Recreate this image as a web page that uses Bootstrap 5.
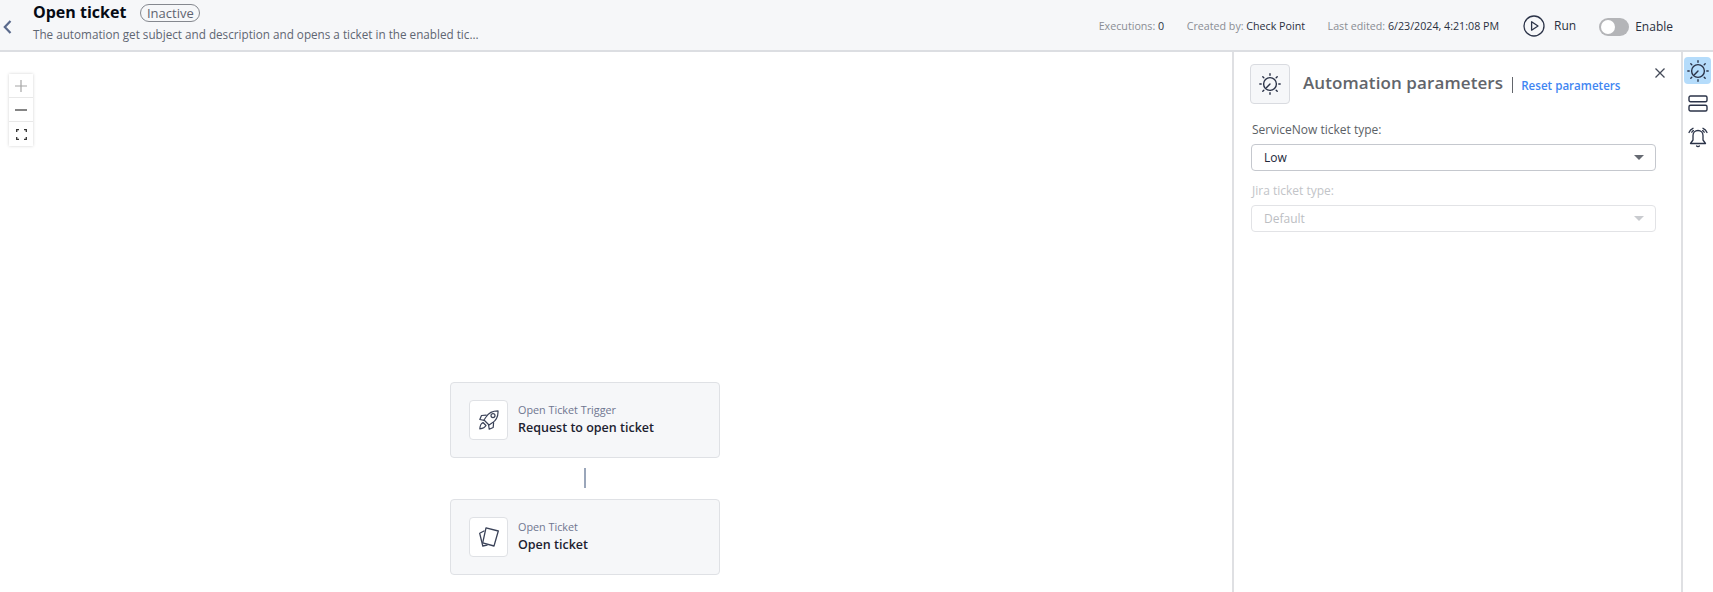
<!DOCTYPE html>
<html lang="en">
<head>
    <meta charset="UTF-8">
    <meta name="viewport" content="width=device-width, initial-scale=1.0">
    <title>Open ticket</title>
    <link href="https://cdn.jsdelivr.net/npm/bootstrap@5.3.3/dist/css/bootstrap.min.css" rel="stylesheet">
    <style>
        html, body { height: 100%; }
        body {
            font-family: "Open Sans", "Liberation Sans", sans-serif;
            font-size: 12px;
            color: #22283a;
            background: #fff;
            overflow: hidden;
        }
        .app-shell { height: 592px; }
        .top-bar {
            height: 52px;
            background: #f6f7f9;
            border-bottom: 2px solid #dcdee2;
        }
        .back-btn { width: 33px; padding-left: 3px; margin-top: 2px; }
        .title-block { padding-top: 1px; }
        .auto-title { font-size: 16px; font-weight: 700; color: #050a14; line-height: 23px; margin: 0; }
        .status-pill {
            font-size: 13px;
            line-height: 16px;
            color: #5f6470;
            border: 1px solid #85888f;
            border-radius: 10px;
            padding: 0 5px;
            margin-left: 14px;
            width: 60px;
            text-align: center;
        }
        .auto-desc { font-size: 11.7px; line-height: 16px; color: #5f6672; margin: 2px 0 0; }
        .meta-row { padding-top: 3px; color: #2a3040; font-size: 10.7px; }
        .meta-row .meta-key { color: #8a8d94; }
        .meta-gap { margin-left: 22.5px; }
        .run-label { font-size: 12px; margin-left: 9px; color: #2a3040; }
        .run-wrap { margin-left: 24px; margin-top: -1px; }
        .toggle-track {
            width: 30px;
            height: 18px;
            border-radius: 9px;
            background: #b4b5b8;
            margin-left: 23px;
            padding: 2px;
        }
        .toggle-knob { width: 14px; height: 14px; border-radius: 50%; background: #fff; display: block; }
        .enable-label { font-size: 12px; margin-left: 6px; margin-right: 40px; color: #2a3040; }
        .work-area { height: 540px; }
        .flow-canvas { flex: 1 1 auto; position: relative; }
        .zoom-tools {
            position: absolute;
            left: 9px;
            top: 22px;
            width: 24px;
            background: #fff;
            box-shadow: 0 0 3px rgba(0, 0, 0, .18);
        }
        .zoom-tools button {
            display: flex;
            align-items: center;
            justify-content: center;
            width: 24px;
            height: 24px;
            padding: 0;
            border: 0;
            background: #fff;
            border-bottom: 1px solid #e8e8e8;
        }
        .zoom-tools button:last-child { border-bottom: 0; }
        .flow-stack { position: absolute; left: 450px; top: 330px; width: 270px; }
        .flow-node {
            height: 76px;
            background: #f6f7f9;
            border: 1px solid #dfe1e5;
            border-radius: 4px;
            padding: 0 18px;
        }
        .node-icon {
            width: 39px;
            height: 40px;
            background: #fff;
            border: 1px solid #dfe1e5;
            border-radius: 4px;
            margin-right: 10px;
        }
        .node-text { margin-top: -1px; }
        .node-kind { font-size: 10.8px; line-height: 15px; color: #6f7690; }
        .node-name { font-size: 12.5px; font-weight: 600; line-height: 18px; color: #1d2230; margin-top: 2px; }
        .flow-link { width: 2px; height: 20px; background: #9aa6ba; margin: 10px auto 11px; }
        .param-panel {
            width: 451px;
            flex: 0 0 451px;
            border-left: 2px solid #dfe0e3;
            border-right: 2px solid #dfe0e3;
            padding: 12px 25px 0 16px;
            position: relative;
        }
        .param-icon {
            width: 40px;
            height: 40px;
            background: #f6f7f9;
            border: 1px solid #d9dbe0;
            border-radius: 4px;
        }
        .param-title { font-size: 17px; font-weight: 600; color: #62656b; margin-left: 13px; letter-spacing: .1px; line-height: 22px; margin-bottom: 2px; }
        .param-sep { width: 1px; height: 16px; background: #62656b; margin: 2px 9px 0; }
        .reset-link { font-size: 11.6px; font-weight: 600; color: #3f86f2; text-decoration: none; margin-top: 3px; margin-left: -1px; }
        .close-btn { position: absolute; right: 16px; top: 16px; border: 0; background: none; padding: 0; line-height: 0; }
        .field-label { display: block; font-size: 12px; line-height: 16px; color: #5b5f66; margin: 0 0 6px 2px; }
        .field-select {
            width: 405px;
            height: 27px;
            margin-left: 1px;
            padding: 0 30px 0 12px;
            font-size: 12px;
            color: #22283a;
            border: 1px solid #c5c8ce;
            border-radius: 4px;
            background-position: right 11px center;
            background-size: 10px 5px;
            background-image: url("data:image/svg+xml,%3Csvg xmlns='http://www.w3.org/2000/svg' viewBox='0 0 10 5'%3E%3Cpath d='M0 0h10L5 5z' fill='%23666a72'/%3E%3C/svg%3E");
        }
        .field-select:disabled {
            background-color: #fff;
            color: #bcbec3;
            border-color: #e2e3e6;
            background-image: url("data:image/svg+xml,%3Csvg xmlns='http://www.w3.org/2000/svg' viewBox='0 0 10 5'%3E%3Cpath d='M0 0h10L5 5z' fill='%23c9cbcf'/%3E%3C/svg%3E");
        }
        .field-off { color: #c2c4c8; }
        .first-field { margin-top: 18px; }
        .next-field { margin-top: 12px; }
        .side-rail { width: 30px; flex: 0 0 30px; padding: 5px 1px 0; }
        .rail-btn {
            width: 27px;
            height: 27px;
            border-radius: 4px;
            border: 0;
            padding: 0;
            background: none;
            display: flex;
            align-items: center;
            justify-content: center;
            margin-bottom: 6px;
        }
        .rail-btn.is-active { background: #b5dcfb; }
    </style>
</head>
<body>
    <svg class="d-none">
        <symbol id="ico-knob" viewBox="0 0 24 24">
            <g fill="none" stroke="#2b3348" stroke-width="1.4" stroke-linecap="round">
                <circle cx="12" cy="12" r="6.4"/>
                <path d="M12 12 8.600 15.600"/>
                <path d="M12 1.800v1.400M12 20.800v1.400M1.800 12h1.400M20.800 12h1.400M4.800 4.800l1 1M18.200 18.200l1 1M19.200 4.800l-1 1M5.800 18.200l-1 1"/>
            </g>
        </symbol>
    </svg>

    <div class="app-shell d-flex flex-column">
        <!-- top bar -->
        <header class="top-bar d-flex align-items-center">
            <a class="back-btn d-block" href="#">
                <svg width="9" height="14" viewBox="0 0 9 14"><path d="M7.500 1 1.800 7l5.700 6" fill="none" stroke="#5a6a8c" stroke-width="2.200"/></svg>
            </a>
            <div class="title-block flex-grow-1 align-self-start">
                <div class="d-flex align-items-center">
                    <h1 class="auto-title">Open ticket</h1>
                    <span class="status-pill">Inactive</span>
                </div>
                <p class="auto-desc">The automation get subject and description and opens a ticket in the enabled tic...</p>
            </div>
            <div class="meta-row d-flex align-items-center">
                <span><span class="meta-key">Executions:</span> 0</span>
                <span class="meta-gap"><span class="meta-key">Created by:</span> Check Point</span>
                <span class="meta-gap"><span class="meta-key">Last edited:</span> 6/23/2024, 4:21:08 PM</span>
                <span class="run-wrap d-flex align-items-center">
                    <svg width="22" height="22" viewBox="0 0 22 22"><circle cx="11" cy="11" r="10" fill="none" stroke="#2b3348" stroke-width="1.300"/><path d="M8.600 6.800v8.400L15 11z" fill="none" stroke="#2b3348" stroke-width="1.300" stroke-linejoin="round"/></svg>
                    <span class="run-label">Run</span>
                </span>
                <span class="toggle-track"><span class="toggle-knob"></span></span>
                <span class="enable-label">Enable</span>
            </div>
        </header>

        <div class="work-area d-flex">
            <!-- canvas -->
            <main class="flow-canvas">
                <div class="zoom-tools">
                    <button type="button" aria-label="Zoom in"><svg width="12" height="12" viewBox="0 0 12 12"><path d="M6 0v12M0 6h12" stroke="#a6a6a6" stroke-width="1.200"/></svg></button>
                    <button type="button" aria-label="Zoom out"><svg width="12" height="12" viewBox="0 0 12 12"><path d="M0 6h12" stroke="#333" stroke-width="1.200"/></svg></button>
                    <button type="button" aria-label="Fit"><svg width="11" height="11" viewBox="0 0 11 11"><path d="M.7 3V.7h2.300M8 .7h2.300V3M10.300 8v2.300H8M3 10.300H.7V8" fill="none" stroke="#333" stroke-width="1.300"/></svg></button>
                </div>
                <div class="flow-stack">
                    <div class="flow-node d-flex align-items-center">
                        <div class="node-icon d-flex align-items-center justify-content-center">
                            <svg width="20" height="20" viewBox="0 0 20 20" fill="none" stroke="#3a4258" stroke-width="1.200" stroke-linejoin="round" stroke-linecap="round">
                                <path d="M19 .8C14 .8 9.500 3 7 7l-2 3 5 5 3-2c4-2.500 6.300-7 6-12.200z"/>
                                <circle cx="14" cy="5.600" r="2"/>
                                <path d="M7.200 5.200 2.500 5.500.8 9.500l4.400.8"/>
                                <path d="M14.600 12.600l-.4 4.900-4 1.700-.6-4.200"/>
                                <path d="M4 12.500C2 13.500 1 16 .8 18.800 3.500 18.500 6 17.500 7 15.500z"/>
                            </svg>
                        </div>
                        <div class="node-text">
                            <div class="node-kind">Open Ticket Trigger</div>
                            <div class="node-name">Request to open ticket</div>
                        </div>
                    </div>
                    <div class="flow-link"></div>
                    <div class="flow-node d-flex align-items-center">
                        <div class="node-icon d-flex align-items-center justify-content-center">
                            <svg width="20" height="20" viewBox="0 0 20 20" fill="none" stroke="#3a4258" stroke-width="1.300" stroke-linejoin="round" stroke-linecap="round">
                                <path d="M7 .8 19.300 4 15 19 3.700 15.800z"/>
                                <path d="M5 4 .7 6.300 3.800 19l4.200-.8"/>
                            </svg>
                        </div>
                        <div class="node-text">
                            <div class="node-kind">Open Ticket</div>
                            <div class="node-name">Open ticket</div>
                        </div>
                    </div>
                </div>
            </main>

            <!-- parameters -->
            <aside class="param-panel">
                <button class="close-btn" type="button" aria-label="Close"><svg width="10" height="10" viewBox="0 0 10 10"><path d="M.5.5l9 9M9.500.5l-9 9" stroke="#444a58" stroke-width="1.300"/></svg></button>
                <div class="d-flex align-items-center">
                    <div class="param-icon d-flex align-items-center justify-content-center">
                        <svg width="24" height="24"><use href="#ico-knob"/></svg>
                    </div>
                    <span class="param-title">Automation parameters</span>
                    <span class="param-sep"></span>
                    <a class="reset-link" href="#">Reset parameters</a>
                </div>
                <div class="first-field">
                    <label class="field-label" for="snow-type">ServiceNow ticket type:</label>
                    <select class="form-select field-select" id="snow-type"><option>Low</option></select>
                </div>
                <div class="next-field">
                    <label class="field-label field-off" for="jira-type">Jira ticket type:</label>
                    <select class="form-select field-select" id="jira-type" disabled><option>Default</option></select>
                </div>
            </aside>

            <!-- side rail -->
            <nav class="side-rail">
                <button class="rail-btn is-active" type="button" aria-label="Parameters"><svg width="24" height="24"><use href="#ico-knob"/></svg></button>
                <button class="rail-btn" type="button" aria-label="Steps">
                    <svg width="20" height="17" viewBox="0 0 20 17" fill="none" stroke="#2b3348" stroke-width="1.400"><rect x="1" y="1" width="18" height="5.800" rx="1.500"/><rect x="1" y="10.200" width="18" height="5.800" rx="1.500"/></svg>
                </button>
                <button class="rail-btn" type="button" aria-label="Alerts">
                    <svg width="22" height="22" viewBox="0 0 22 22" fill="none" stroke="#2b3348" stroke-width="1.300" stroke-linecap="round" stroke-linejoin="round">
                        <path d="M11 4.500c-3 0-5 2.300-5 5V14l-2.500 3.500h15L16 14V9.500c0-2.700-2-5-5-5z"/>
                        <path d="M9.600 20c.7.700 2.100.700 2.800 0"/>
                        <path d="M2 6.500C2.800 4.500 4 3.200 6 2.300M4.800 6.200c.4-.7.900-1.200 1.600-1.600M20 6.500c-.8-2-2-3.300-4-4.200M17.200 6.200c-.4-.7-.9-1.200-1.600-1.600"/>
                    </svg>
                </button>
            </nav>
        </div>
    </div>

    <script src="https://cdn.jsdelivr.net/npm/bootstrap@5.3.3/dist/js/bootstrap.bundle.min.js"></script>
</body>
</html>
